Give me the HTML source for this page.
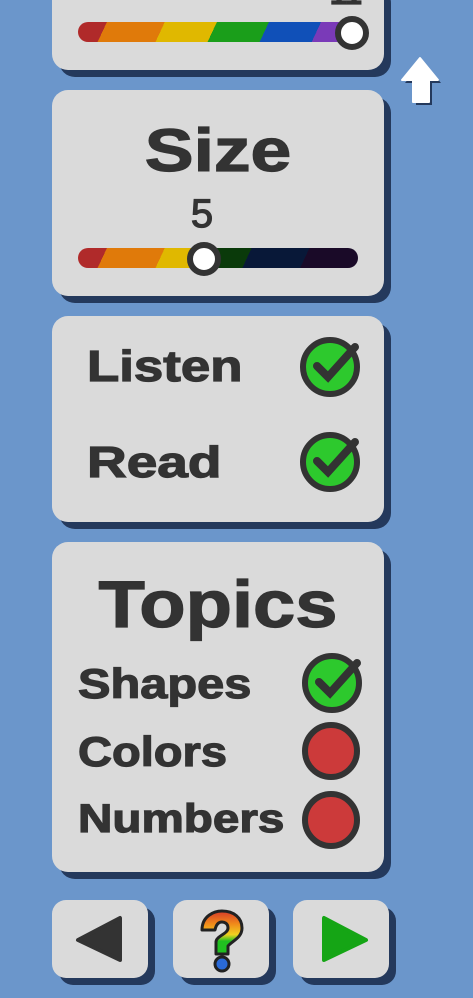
<!DOCTYPE html>
<html><head><style>
body{margin:0;width:473px;height:998px;overflow:hidden;background:#6b96cb;font-family:"Liberation Sans",sans-serif;position:relative}
.p{position:absolute;background:#dadada;border-radius:16px;box-shadow:7px 7px 0 #24395c}
.t{position:absolute;color:#333;font-weight:bold;white-space:nowrap;-webkit-text-stroke:1.2px #333;transform-origin:left center}
.c{transform-origin:center center}
.track{position:absolute;left:78px;width:280px;height:20px;border-radius:10px}
.knob{position:absolute;width:22px;height:22px;border-radius:50%;background:#fff;border:6px solid #333}
.ck{position:absolute;width:48px;height:48px;border-radius:50%;background:#2dc92d;border:6px solid #333}
.rd{position:absolute;width:46px;height:46px;border-radius:50%;background:#cc3a3a;border:6px solid #333}
</style></head><body>
<div class="p" style="left:52px;top:-20px;width:332px;height:90px"></div>
<div class="track" style="top:22px;background:linear-gradient(115deg,#b02a2a 0 10%,#e07a0a 10% 30%,#e0b800 30% 48%,#1a9e1a 48% 66%,#1050b8 66% 84%,#7a3ab8 84%)"></div>
<div class="knob" style="left:335px;top:16px"></div>
<div class="t" style="left:330px;top:-22px;font-size:30px">11</div>
<svg style="position:absolute;left:398px;top:54px" width="44" height="56"><path d="M22 4 L40 26 H31 V48 H15 V26 H4 Z" fill="#24395c" transform="translate(3,3)"/><path d="M22 4 L40 26 H31 V48 H15 V26 H4 Z" fill="#fff" stroke="#fff" stroke-width="2" stroke-linejoin="round"/></svg>

<div class="p" style="left:52px;top:90px;width:332px;height:206px"></div>
<div class="t c" style="left:52px;width:332px;text-align:center;top:116px;font-size:60px;transform:scaleX(1.22)">Size</div>
<div class="t c" style="left:52px;width:300px;text-align:center;top:192px;font-size:40px;font-weight:normal">5</div>
<div class="track" style="top:248px;background:linear-gradient(115deg,#b02a2a 0 10%,#e07a0a 10% 30%,#e0b800 30% 44%,#0a3a0a 44% 60%,#081838 60% 80%,#1a0a28 80%)"></div>
<div class="knob" style="left:187px;top:242px"></div>

<div class="p" style="left:52px;top:316px;width:332px;height:206px"></div>
<div class="t" style="left:87px;top:342px;font-size:44px;transform:scaleX(1.2)">Listen</div>
<div class="t" style="left:87px;top:438px;font-size:44px;transform:scaleX(1.25)">Read</div>
<div class="ck" style="left:300px;top:337px"></div>
<div class="ck" style="left:300px;top:432px"></div>
<svg style="position:absolute;left:300px;top:330px" width="70" height="200"><g stroke="#333" stroke-width="8" stroke-linecap="round" fill="none"><path d="M17 36 L28 47 L55 17"/><path d="M17 131 L28 142 L55 112"/></g></svg>

<div class="p" style="left:52px;top:542px;width:332px;height:330px"></div>
<div class="t c" style="left:52px;width:332px;text-align:center;top:566px;font-size:66px;transform:scaleX(1.15)">Topics</div>
<div class="t" style="left:78px;top:660px;font-size:42px;transform:scaleX(1.16)">Shapes</div>
<div class="t" style="left:78px;top:728px;font-size:42px;transform:scaleX(1.12)">Colors</div>
<div class="t" style="left:78px;top:797px;font-size:40px;transform:scaleX(1.19)">Numbers</div>
<div class="ck" style="left:302px;top:653px"></div>
<svg style="position:absolute;left:302px;top:646px" width="70" height="70"><path d="M17 36 L28 47 L55 17" stroke="#333" stroke-width="8" stroke-linecap="round" fill="none"/></svg>
<div class="rd" style="left:302px;top:722px"></div>
<div class="rd" style="left:302px;top:791px"></div>

<div class="p" style="left:52px;top:900px;width:96px;height:78px;border-radius:14px"></div>
<div class="p" style="left:173px;top:900px;width:96px;height:78px;border-radius:14px"></div>
<div class="p" style="left:293px;top:900px;width:96px;height:78px;border-radius:14px"></div>
<svg style="position:absolute;left:74px;top:914px" width="52" height="52"><path d="M46 4 L46 46 L4 26 Z" fill="#333" stroke="#333" stroke-width="4" stroke-linejoin="round"/></svg>
<svg style="position:absolute;left:318px;top:914px" width="52" height="52"><path d="M6 4 L6 46 L48 26 Z" fill="#15a515" stroke="#15a515" stroke-width="4" stroke-linejoin="round"/></svg>
<svg style="position:absolute;left:196px;top:908px" width="50" height="66"><defs><linearGradient id="g" x1="0" y1="0" x2="0" y2="1"><stop offset="0" stop-color="#d83a2a"/><stop offset=".3" stop-color="#f08a1a"/><stop offset=".55" stop-color="#f0d020"/><stop offset=".7" stop-color="#20c020"/></linearGradient></defs><path d="M6 22 C6 8 18 3 26 3 C38 3 46 10 46 20 C46 30 36 33 32 38 L32 46 L20 46 L20 34 C20 28 32 26 32 20 C32 15 28 14 26 14 C22 14 20 17 19 22 Z" fill="url(#g)" stroke="#222" stroke-width="3" stroke-linejoin="round"/><circle cx="26" cy="56" r="7" fill="#2a6ad8" stroke="#222" stroke-width="3"/></svg>
</body></html>
